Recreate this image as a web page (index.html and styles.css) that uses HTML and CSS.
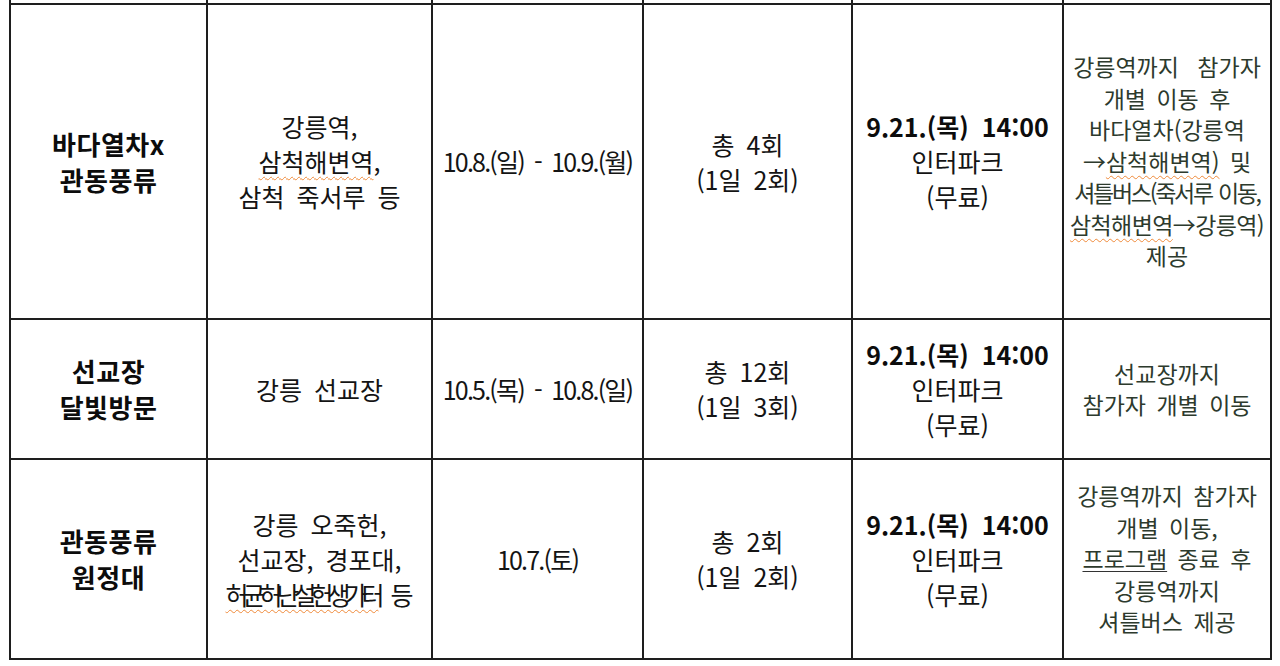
FILE: index.html
```html
<!DOCTYPE html>
<html lang="ko">
<head>
<meta charset="utf-8">
<title>프로그램 안내</title>
<link rel="stylesheet" href="styles.css">
</head>
<body>
<table class="grid">
  <colgroup>
    <col class="c1"><col class="c2"><col class="c3"><col class="c4"><col class="c5"><col class="c6">
  </colgroup>
  <tr class="stub">
    <td></td><td></td><td></td><td></td><td></td><td></td>
  </tr>
  <tr class="r1">
    <td class="name">바다열차x<br>관동풍류</td>
    <td>강릉역,<br><span class="spell">삼척해변역</span>,<br>삼척 죽서루 등</td>
    <td class="date">10.8.(일) - 10.9.(월)</td>
    <td>총 4회<br>(1일 2회)</td>
    <td><b class="time">9.21.(목) 14:00</b><br>인터파크<br>(무료)</td>
    <td class="note"><span class="wide">강릉역까지 참가자</span><br>개별 이동 후<br>바다열차(강릉역<br>→<span class="spell">삼척해변역)</span> 및<br><span class="tight2">셔틀버스(죽서루 이동,</span><br><span class="spell tight1">삼척해변역</span><span class="tight1">→강릉역)</span><br>제공</td>
  </tr>
  <tr class="r2">
    <td class="name">선교장<br>달빛방문</td>
    <td>강릉 선교장</td>
    <td class="date">10.5.(목) - 10.8.(일)</td>
    <td>총 12회<br>(1일 3회)</td>
    <td><b class="time">9.21.(목) 14:00</b><br>인터파크<br>(무료)</td>
    <td class="note">선교장까지<br>참가자 개별 이동</td>
  </tr>
  <tr class="r3">
    <td class="name">관동풍류<br>원정대</td>
    <td>강릉 오죽헌,<br>선교장, 경포대,<br><span class="spell squeeze">허균허난설헌생가터</span> 등</td>
    <td class="date">10.7.(토)</td>
    <td>총 2회<br>(1일 2회)</td>
    <td><b class="time">9.21.(목) 14:00</b><br>인터파크<br>(무료)</td>
    <td class="note">강릉역까지 참가자<br>개별 이동,<br><span class="uline">프로그램</span> 종료 후<br>강릉역까지<br>셔틀버스 제공</td>
  </tr>
</table>
</body>
</html>
```

FILE: styles.css
```css
html, body {
  margin: 0;
  padding: 0;
  background: #ffffff;
}

body {
  font-family: "Noto Sans CJK KR", "Noto Sans", sans-serif;
  color: #141414;
  overflow: hidden;
}

.grid {
  border-collapse: collapse;
  table-layout: fixed;
  width: 1263px;
  margin-left: 9px;
}

.c1 { width: 197px; }
.c2 { width: 225px; }
.c3 { width: 211px; }
.c4 { width: 209px; }
.c5 { width: 211px; }
.c6 { width: 208px; }

.grid td {
  border: 2px solid #1e1e1e;
  padding: 0;
  text-align: center;
  vertical-align: middle;
  font-size: 25px;
  line-height: 35px;
  word-spacing: 5px;
  letter-spacing: 0;
  white-space: nowrap;
  overflow: hidden;
}

.grid .stub td {
  border-top: none;
  height: 3px;
  line-height: 0;
}

.r1 td { height: 313px; }
.r2 td { height: 138px; }
.r3 td { height: 198px; }

.grid td.name {
  font-weight: 700;
  font-size: 26px;
  line-height: 36px;
  letter-spacing: 0.5px;
  color: #0c0c0c;
}

.grid td.date {
  letter-spacing: -1.8px;
  word-spacing: 5px;
}

.time {
  font-weight: 700;
  letter-spacing: 0;
  word-spacing: 6px;
  color: #0c0c0c;
}

.grid td.note {
  font-size: 23px;
  line-height: 31.5px;
  color: #2d3a2d;
  letter-spacing: 0;
  word-spacing: 4px;
}

.wide {
  word-spacing: 12px;
}

.spell {
  text-decoration: underline wavy #ef8a3a;
  text-decoration-thickness: 1px;
  text-underline-offset: 4px;
}

.uline {
  text-decoration: underline #333333;
  text-decoration-thickness: 1px;
  text-underline-offset: 3px;
}

.squeeze {
  letter-spacing: -6px;
}

.tight1 {
  letter-spacing: -0.6px;
}

.tight2 {
  letter-spacing: -2.3px;
  word-spacing: 2px;
}
```
